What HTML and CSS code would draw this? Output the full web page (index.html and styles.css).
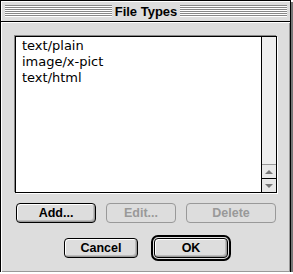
FILE: index.html
```html
<!DOCTYPE html>
<html>
<head>
    <title>File Types</title>
    <link rel="stylesheet" href="styles.css">
</head>
<body>
    <div class="window">
        <div class="titlebar">
            <div class="stripes"></div>
            <div class="title">File Types</div>
            <div class="stripes"></div>
        </div>
        <div class="content">
            <div class="listbox">
                <div class="items">
                    <div class="item">text/plain</div>
                    <div class="item">image/x-pict</div>
                    <div class="item">text/html</div>
                </div>
                <div class="scrollbar">
                    <div class="track"></div>
                    <div class="arrow up"><span class="tri-up"></span></div>
                    <div class="arrow down"><span class="tri-down"></span></div>
                </div>
            </div>
            <div class="row">
                <div class="button add">Add...</div>
                <div class="button edit disabled">Edit...</div>
                <div class="button delete disabled">Delete</div>
            </div>
            <div class="row bottom">
                <div class="button cancel">Cancel</div>
                <div class="ring">
                    <div class="button ok">OK</div>
                </div>
            </div>
        </div>
    </div>
</body>
</html>
```

FILE: styles.css
```css
body {
    margin: 0;
    background: #fff;
    font-family: "Liberation Sans", Arial, sans-serif;
}
.window {
    width: 291px;
    height: 272px;
    box-sizing: border-box;
    border: 1px solid #000;
    background: #ddd;
    box-shadow: 2px 2px 0 #777;
}
.titlebar {
    height: 20px;
    border-bottom: 1px solid #000;
    display: flex;
    align-items: center;
    padding: 0 3px 0 4px;
    background: #ddd;
    box-shadow: inset 1px 1px 0 #fff;
}
.stripes {
    flex: 1;
    height: 12px;
    background: repeating-linear-gradient(#888 0 1px, #fff 1px 2px);
}
.title {
    padding: 0 3px;
    font-weight: bold;
    font-size: 13px;
    color: #000;
}
.content {
    padding: 14px 13px 0 14px;
    box-shadow: inset 1px 1px 0 #fff, inset -1px -1px 0 #999;
    height: 250px;
    box-sizing: border-box;
}
.listbox {
    width: 262px;
    height: 157px;
    box-sizing: border-box;
    border: 1px solid #000;
    display: flex;
    box-shadow: -1px -1px 0 #888, 1px 1px 0 #fff;
}
.items {
    flex: 1;
    background: #fff;
    padding: 1px 6px;
    font-family: "DejaVu Sans", Verdana, sans-serif;
    font-size: 13px;
    line-height: 16px;
}
.scrollbar {
    width: 14px;
    border-left: 1px solid #000;
    background: #eee;
    display: flex;
    flex-direction: column;
}
.track {
    flex: 1;
}
.arrow {
    height: 13px;
    border-top: 1px solid #999;
    display: flex;
    align-items: center;
    justify-content: center;
    background: #e8e8e8;
}
.arrow.down {
    border-top-color: #000;
}
.tri-up {
    border-left: 4px solid transparent;
    border-right: 4px solid transparent;
    border-bottom: 4px solid #777;
}
.tri-down {
    border-left: 4px solid transparent;
    border-right: 4px solid transparent;
    border-top: 4px solid #777;
}
.row {
    display: flex;
    gap: 10px;
    margin-top: 10px;
    margin-left: 1px;
}
.row.bottom {
    margin-top: 12px;
    margin-left: 49px;
    gap: 13px;
    align-items: center;
}
.button {
    height: 20px;
    box-sizing: border-box;
    border: 1px solid #000;
    border-radius: 4px;
    background: #ddd;
    box-shadow: inset 1px 1px 0 #fff, inset -1px -1px 0 #999, inset -2px -2px 0 #bbb;
    display: flex;
    align-items: center;
    justify-content: center;
    font-weight: bold;
    font-size: 12.5px;
    color: #000;
}
.button.disabled {
    border-color: #999;
    color: #999;
    box-shadow: none;
}
.add {
    width: 80px;
}
.edit {
    width: 70px;
}
.delete {
    width: 90px;
}
.cancel, .ok {
    width: 74px;
}
.ring {
    border: 2px solid #000;
    border-radius: 7px;
    padding: 1px;
}
```
